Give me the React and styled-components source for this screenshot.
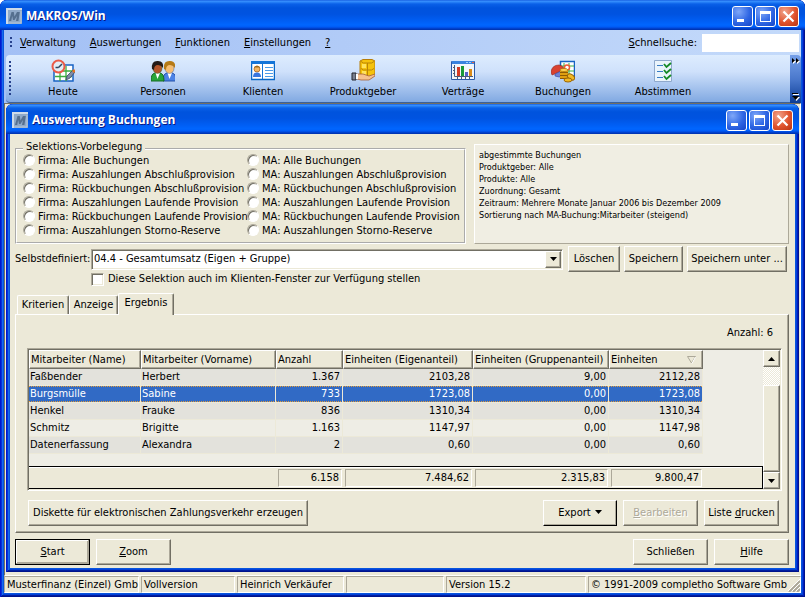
import React, { useState } from "react";
import styled, { createGlobalStyle, css } from "styled-components";

const c = {
  face: "#ece9d8",
  light: "#ffffff",
  shadow: "#aca899",
  dark: "#716f64",
  select: "#316ac5",
};

const uiFont = '"DejaVu Sans Condensed", "DejaVu Sans", sans-serif';

const GlobalStyle = createGlobalStyle`
  *, *::before, *::after { box-sizing: border-box; }
  body { margin: 0; background: #fff; }
  body, button, input, select, table { font-family: ${uiFont}; font-size: 11px; line-height: 14px; color: #000; }
  button, input, select { margin: 0; }
`;

const raised = css`
  border: 1px solid;
  border-color: ${c.light} ${c.dark} ${c.dark} ${c.light};
  box-shadow: inset -1px -1px 0 ${c.shadow};
`;
const sunken = css`
  border: 1px solid;
  border-color: ${c.shadow} ${c.light} ${c.light} ${c.shadow};
`;
const deepSunken = css`
  ${sunken}
  box-shadow: inset 1px 1px 0 ${c.dark}, inset -1px -1px 0 ${c.face};
`;

/* ---------- window frame ---------- */

const Frame = styled.div`
  display: flex;
  flex-direction: column;
  padding: 0 4px 4px;
  border-radius: 7px 7px 0 0;
  background: #0855dd;
  box-shadow: inset 1px 0 #0019cf, inset -1px 0 #00138c, inset 0 -1px #00138c,
    inset 2px 0 #0831d9, inset -2px 0 #001dc0, inset 0 -2px #001ea0,
    inset 3px 0 #166aee, inset -3px -3px 0 #0441d8;
`;
const MainFrame = styled(Frame)`
  min-height: 100vh;
`;
const ChildFrame = styled(Frame)`
  flex: 1;
`;

const TitleBar = styled.header`
  display: flex;
  align-items: center;
  gap: 2px;
  height: 30px;
  margin: 0 -4px;
  padding: 2px 6px 0;
  border-radius: 7px 7px 0 0;
  background: linear-gradient(#0a4fd8 0, #3c93ff 1px, #2a84f8 2px, #0a60e8 4px, #0053dd 8px, #0053e0 14px, #005ef4 21px, #0066ff 25px, #005bf5 27px, #0046d8 28px, #002fa8 30px);
`;
const Title = styled.h1`
  flex: 1;
  margin: 0 0 0 2px;
  font: bold 12px/18px "Open Sans", "Noto Sans", sans-serif;
  color: #fff;
  text-shadow: 1px 1px #0a1883;
`;
const CaptionButton = styled.button`
  display: grid;
  place-items: center;
  width: 21px;
  height: 21px;
  padding: 0;
  border: 1px solid #fff;
  border-radius: 3px;
  background: ${(p) =>
    p.$close
      ? "radial-gradient(circle at 30% 25%, #f0a48c, #e0532d 55%, #b83412)"
      : "radial-gradient(circle at 30% 25%, #7fa7f8, #2f66e4 55%, #1444c8)"};
`;

const AppMark = () => (
  <svg width="16" height="16" viewBox="0 0 16 16" aria-hidden="true">
    <rect width="16" height="16" fill="#8fa9c8" />
    <path d="M0 0H16V2H2V16H0Z" fill="#cfdbe8" />
    <path d="M3 13L5.5 4H7.8L8.500 8.500L11 4H13.8L12.400 13H10L11 8L8.500 12H7L6.200 8L5.200 13Z" fill="#56708f" />
    <path d="M2 15H15V3" stroke="#b5c6da" fill="none" />
  </svg>
);

const Captions = () => (
  <>
    <CaptionButton aria-label="Minimieren">
      <svg width="19" height="19"><path d="M4 12H11V15H4Z" fill="#fff" /></svg>
    </CaptionButton>
    <CaptionButton aria-label="Maximieren">
      <svg width="19" height="19"><path d="M4 4H15V15H4Z M5 7V14H14V7Z" fill="#fff" fillRule="evenodd" /></svg>
    </CaptionButton>
    <CaptionButton $close aria-label="Fenster schließen">
      <svg width="19" height="19"><path d="M4.500 4.500L14.500 14.500M14.500 4.500L4.500 14.500" stroke="#fff" strokeWidth="2.2" /></svg>
    </CaptionButton>
  </>
);

/* ---------- menu and toolbar ---------- */

const Grip = styled.span`
  flex: none;
  width: 2px;
  height: ${(p) => (p.$tall ? 35 : 12)}px;
  background: repeating-linear-gradient(#27418c 0 2px, transparent 2px 4px);
`;
const MenuBar = styled.nav`
  display: flex;
  align-items: center;
  gap: 14px;
  height: 25px;
  padding: 0 2px 0 6px;
  background: linear-gradient(90deg, #a3c0f5, #c4dafa);
`;
const MenuItem = styled.button`
  margin-left: ${(p) => (p.$first ? -6 : 0)}px;
  padding: 0;
  border: 0;
  background: none;
  white-space: nowrap;
`;
const SearchBox = styled.div`
  display: flex;
  align-items: center;
  gap: 5px;
  margin-left: auto;
`;
const SearchInput = styled.input`
  width: 97px;
  height: 18px;
  padding: 0 3px;
  border: 0;
  background: #fff;
`;
const ToolArea = styled.div`
  display: flex;
  height: 48px;
  padding-left: 2px;
  background: linear-gradient(90deg, #a3c0f5, #c4dafa);
`;
const ToolStrip = styled.div`
  display: flex;
  align-items: center;
  flex: 1;
  padding-left: 3px;
  border-radius: 4px 0 0 4px;
  border-bottom: 1px solid #3b619c;
  background: linear-gradient(#ddecfe, #cfe1fb 35%, #81a9e2);
`;
const ToolButton = styled.button`
  display: flex;
  flex-direction: column;
  align-items: center;
  gap: 2px;
  width: 100px;
  padding: 0;
  border: 0;
  background: none;
`;
const Tools = styled.div`
  display: flex;
  margin-left: 2px;
`;
const Overflow = styled.button`
  display: flex;
  flex-direction: column;
  justify-content: space-between;
  align-items: center;
  width: 11px;
  padding: 3px 0 2px;
  border: 0;
  border-radius: 0 4px 0 0;
  background: linear-gradient(#76a0e8, #4a78cc 50%, #0c3c96);
`;

const Person = ({ x, hair, skin, suit, dark }) => (
  <g transform={`translate(${x} 0)`}>
    <path d="M0 22Q0 14.5 4 14H9Q13 14.500 13 22Z" fill={suit} stroke={dark} />
    <path d="M4.500 14L6.500 20L9 14Z" fill="#fff" />
    <ellipse cx="6.500" cy="9.500" rx="4.500" ry="5" fill={skin} stroke={dark} strokeWidth=".4" />
    <path d="M1 10Q0 1.500 7 2Q13 2 12 9Q10 6 7 6Q3 6 3 11Z" fill={hair} />
  </g>
);

const icons = {
  today: (
    <>
      <path d="M3 6H22V22H3Z" fill="#fff" stroke="#1763c4" strokeWidth="1.500" />
      <path d="M9 7V22M15 7V22M4 12H21M4 17.500H21" stroke="#3aae3e" strokeWidth="1.300" />
      <circle cx="7.500" cy="7.500" r="6" fill="#e2edf7" stroke="#ea5a48" strokeWidth="2" />
      <path d="M7.500 8.500L11 5M7.500 8.500H4.500" stroke="#30445e" strokeWidth="1.500" />
      <path d="M15 21L16 17L22 11L24 13L19 19Z" fill="#7f8ca6" stroke="#3a4868" strokeWidth=".8" />
      <path d="M21 12L23 10L24.500 12L23 14Z" fill="#e8731c" />
    </>
  ),
  people: (
    <>
      <Person x={12} hair="#b57a16" skin="#f6bd72" suit="#4b82e6" dark="#2450a8" />
      <Person x={0} hair="#241b18" skin="#b4552a" suit="#28a53a" dark="#146a20" />
    </>
  ),
  clients: (
    <>
      <path d="M0.500 3.500H23.500V20.500H.5Z" fill="#fff" stroke="#0868c8" strokeWidth="1.500" />
      <path d="M0 2H24V5H0Z" fill="#1374d8" />
      <path d="M11.500 5V20" stroke="#1374d8" />
      <path d="M14 8.500H22M14 11.500H22M14 14.500H22M14 17.500H22" stroke="#4b9be8" />
      <circle cx="6" cy="10" r="3" fill="#f3b663" stroke="#a8621c" strokeWidth=".8" />
      <path d="M3 8.500Q6 5 9 8.500Z" fill="#9c6a20" />
      <path d="M2 18Q2 13.500 6 13.500Q10 13.500 10 18Z" fill="#3976de" />
    </>
  ),
  product: (
    <>
      <path d="M9 2L12 .5H21L24 2V16L21 18H12L9 16Z" fill="#f5c20c" stroke="#b77c08" />
      <path d="M10 2.500L12.500 4H20.500L23 2.500M10 9.500L12.500 11H20.500L23 9.500M16.500 4V17" stroke="#b98506" fill="none" />
      <path d="M11 5H15V9H11ZM11 12H15V16H11Z" fill="#ffe35b" />
      <path d="M6 15H12L18 17L24 15V17L18 21H10L6 20Z" fill="#f6c18e" stroke="#a55f36" strokeWidth=".8" />
      <path d="M1 14H5V21H1Z" fill="#7a8090" stroke="#22252c" />
      <path d="M5 15H7V20H5Z" fill="#fff" />
    </>
  ),
  contracts: (
    <>
      <path d="M.5 2.500H23.500V20.500H.5Z" fill="#f2f6fb" stroke="#2c5aa8" />
      <path d="M1 2H23V5H1Z" fill="#3a83df" />
      <path d="M15 3H17V4H15ZM18 3H20V4H18Z" fill="#9fd0ff" />
      <path d="M21 3H23V4H21Z" fill="#ee6242" />
      <path d="M3.500 6V17.500H22M2 8.500H3M2 11.500H3M2 14.500H3M6.500 18V20M10.500 18V20M14.500 18V20M18.500 18V20" stroke="#4a5a78" fill="none" />
      <path d="M6 8H9V17H6Z" fill="#d63a24" />
      <path d="M10 7H13V17H10Z" fill="#189838" />
      <path d="M14 13H17V17H14Z" fill="#5560c8" />
      <path d="M18 10H21V17H18Z" fill="#d98a18" />
    </>
  ),
  bookings: (
    <>
      <path d="M9.500 2.500H23.500V17.500H9.500Z" fill="#fff" stroke="#1763c4" strokeWidth="1.500" />
      <path d="M13 4V17M18 4V17M10 7H23M10 12H23" stroke="#3aae3e" />
      <path d="M0 13Q1 6 8 6Q13 7 13 11L6 14L1 16Z" fill="#d94230" stroke="#942014" strokeWidth=".6" />
      <path d="M4 15L12 11V17Q8 19 4 17Z" fill="#6d83d6" stroke="#3548a0" strokeWidth=".6" />
      <circle cx="16" cy="8.500" r="2.500" fill="#fff" stroke="#ee5a36" strokeWidth="1.500" />
      <path d="M9 11H17V20H9Z" fill="#e0a010" />
      <path d="M9 13.500H17M9 16.500H17M9 19.500H17" stroke="#8e5b04" />
      <ellipse cx="13" cy="11" rx="4" ry="1.500" fill="#ffd755" stroke="#a87008" strokeWidth=".7" />
      <ellipse cx="20" cy="18" rx="4" ry="2.500" transform="rotate(35 20 18)" fill="#f2b924" stroke="#9a6505" />
      <ellipse cx="17" cy="21" rx="4" ry="2" fill="#f2b924" stroke="#9a6505" />
    </>
  ),
  reconcile: (
    <>
      <path d="M3.500 1.500H20.500V22.500H3.500Z" fill="#eaf4fc" stroke="#8fa9cc" />
      <path d="M6 6.500H12M6 12.500H12M6 18.500H12" stroke="#377cc4" />
      <path d="M13 5L15.500 8L20 4M13 11L15.500 14L20 10M13 17L15.500 20L20 16" stroke="#158a26" strokeWidth="1.800" fill="none" />
    </>
  ),
};

const tools = [
  ["Heute", "today"],
  ["Personen", "people"],
  ["Klienten", "clients"],
  ["Produktgeber", "product"],
  ["Verträge", "contracts"],
  ["Buchungen", "bookings"],
  ["Abstimmen", "reconcile"],
];

/* ---------- client area ---------- */

const Workspace = styled.main`
  display: flex;
  flex: 1;
  padding: 0 1px 3px 1px;
  border: 1px solid;
  border-color: ${c.dark} #fff #fff ${c.dark};
  background: ${c.face};
  & > * { min-width: 0; }
`;
const Form = styled.form`
  display: flex;
  flex-direction: column;
  flex: 1;
  padding: 10px 6px 3px 5px;
  background: ${c.face};
`;
const TopRow = styled.div`
  display: flex;
  gap: 8px;
  height: 100px;
`;
const Group = styled.fieldset`
  display: grid;
  grid-template-columns: 224px 1fr;
  grid-auto-flow: column;
  grid-template-rows: repeat(6, 14px);
  width: 451px;
  min-width: 0;
  margin: 0;
  padding: 0 6px;
  border: 2px groove #fff;
`;
const Legend = styled.legend`
  height: 10px;
  margin: 0;
  padding: 0 3px;
  line-height: 6px;
`;
const RadioLabel = styled.label`
  display: flex;
  align-items: center;
  gap: 3px;
  white-space: nowrap;
`;
const Radio = styled.input`
  appearance: none;
  flex: none;
  width: 12px;
  height: 12px;
  margin: 0 0 2px;
  border: 1px solid;
  border-color: ${c.shadow} ${c.light} ${c.light} ${c.shadow};
  border-radius: 50%;
  background: #fff;
  box-shadow: inset 1px 1px 0 ${c.dark};
  &:checked { background: radial-gradient(#000 2px, #fff 3px); }
`;
const Summary = styled.div`
  flex: 1;
  padding: 4px;
  ${sunken}
  border-color: ${c.light} ${c.shadow} ${c.shadow} ${c.light};
  background: #f0eee3;
  font-size: 9px;
  line-height: 12px;
`;
const FilterGrid = styled.div`
  display: grid;
  grid-template-columns: 76px 1fr auto;
  align-items: center;
  margin-top: 2px;
  padding-right: 2px;
`;
const Actions = styled.div`
  display: flex;
  gap: 4px;
  margin-left: 5px;
`;
const PushButton = styled.button`
  width: ${(p) => p.$w}px;
  height: 26px;
  padding: 0;
  ${raised}
  background: ${c.face};
  white-space: nowrap;
  & svg { margin-left: 1px; vertical-align: 2px; }
  &:disabled { color: ${c.shadow}; text-shadow: 1px 1px #fff; }
  ${(p) =>
    p.$strong &&
    css`
      border-color: ${p.$strong === "full" ? "#000" : "#fff #000 #000 #fff"};
      box-shadow: inset -1px -1px 0 ${c.shadow}${p.$strong === "full" ? `, inset 1px 1px 0 #fff, inset -2px -2px 0 ${c.shadow}` : ""};
    `}
`;
const SelectWrap = styled.div`
  position: relative;
  height: 21px;
  ${deepSunken}
  background: #fff;
`;
const Select = styled.select`
  appearance: none;
  width: 100%;
  height: 19px;
  padding: 0 20px 0 2px;
  border: 0;
  background: transparent;
`;
const SelectArrow = styled.span`
  position: absolute;
  top: 1px;
  right: 1px;
  display: grid;
  place-items: center;
  width: 16px;
  height: 17px;
  ${raised}
  background: ${c.face};
  pointer-events: none;
`;
const CheckLabel = styled.label`
  display: flex;
  align-items: center;
  gap: 4px;
  grid-column: 2;
`;
const Check = styled.input`
  appearance: none;
  width: 13px;
  height: 13px;
  margin: 0;
  ${deepSunken}
  background: #fff;
  &:checked { background: radial-gradient(#000 3px, #fff 4px); }
`;

const Tabs = styled.div`
  display: flex;
  align-items: flex-end;
  margin: 7px 0 -1px 2px;
  z-index: 1;
`;
const Tab = styled.button`
  width: ${(p) => p.$w}px;
  height: ${(p) => (p.$active ? 22 : 19)}px;
  margin-bottom: ${(p) => (p.$active ? 0 : 1)}px;
  padding: 0 0 ${(p) => (p.$active ? 3 : 0)}px;
  border: 1px solid;
  border-color: ${c.light} ${c.dark} transparent ${c.light};
  border-bottom: 0;
  border-radius: 2px 2px 0 0;
  box-shadow: inset -1px 0 ${c.shadow};
  background: ${c.face};
`;
const Panel = styled.section`
  display: flex;
  flex-direction: column;
  flex: 1;
  padding: 11px 6px 6px 11px;
  ${raised}
`;
const Count = styled.div`
  padding: 0 9px 0 0;
  text-align: right;
`;
const GridBox = styled.div`
  display: flex;
  flex: 1;
  min-height: 140px;
  margin-top: 8px;
  padding: 1px;
  ${deepSunken}
  background: #eeede5;
`;
const Table = styled.table`
  flex: 1;
  min-width: 0;
  table-layout: fixed;
  border-spacing: 0;
`;
const Col = styled.col`
  width: ${(p) => p.$w}px;
`;
const Th = styled.th`
  height: 19px;
  padding: 0 1px;
  ${raised}
  background: ${c.face};
  font-weight: normal;
  text-align: left;
  white-space: nowrap;
  & svg { float: right; margin: 3px 5px 0 0; }
`;
const Row = styled.tr`
  background: ${(p) => (p.$selected ? c.select : p.$odd ? "#e3e2dc" : "#eeede5")};
`;
const Td = styled.td`
  height: 17px;
  padding: 0 2px 0 1px;
  border-right: 1px solid ${c.face};
  border-bottom: 1px solid ${c.face};
  line-height: 16px;
  color: ${(p) => (p.$selected ? "#fff" : "#000")};
  text-align: ${(p) => (p.$num ? "right" : "left")};
  ${(p) =>
    p.$selected &&
    css`
      background: linear-gradient(90deg, #e09a3c 50%, transparent 50%) 0 0 / 2px 1px repeat-x padding-box,
        linear-gradient(90deg, #e09a3c 50%, transparent 50%) 0 100% / 2px 1px repeat-x padding-box;
    `}
`;
const Blank = styled.td`
  padding: 0;
  background: #eeede5;
`;
const FootTd = styled.td`
  height: 23px;
  padding: 2px 1px 1px 2px;
  border-top: 1px solid #000;
  border-bottom: 1px solid #000;
  border-right: ${(p) => (p.$last ? "1px solid #000" : "0")};
  background: ${c.face};
  box-shadow: inset 0 1px #fff;
`;
const Sum = styled.output`
  display: block;
  height: 18px;
  padding: 0 2px;
  ${sunken}
  line-height: 16px;
  text-align: right;
`;
const ScrollBar = styled.div`
  display: flex;
  flex-direction: column;
  width: 17px;
  background: repeating-conic-gradient(#fff 0 25%, ${c.face} 0 50%) 0 0 / 2px 2px;
`;
const ScrollButton = styled.button`
  display: grid;
  place-items: center;
  height: 17px;
  padding: 0;
  ${raised}
  background: ${c.face};
`;
const Thumb = styled.div`
  flex: 1;
  margin-top: 18px;
  ${raised}
  background: ${c.face};
`;
const ButtonRow = styled.div`
  display: flex;
  gap: 6px;
  margin: ${(p) => p.$m};
`;
const Spacer = styled.span`
  flex: 1;
`;

const StatusBar = styled.footer`
  display: flex;
  gap: 2px;
  height: 17px;
  background: ${c.face};
`;
const StatusCell = styled.div`
  flex: ${(p) => (p.$w ? `0 0 ${p.$w}px` : "1")};
  display: flex;
  justify-content: space-between;
  align-items: center;
  min-width: 0;
  padding-left: 2px;
  ${sunken}
  white-space: nowrap;
`;

const Down = () => (
  <svg width="7" height="4" aria-hidden="true"><path d="M0 0H7L3.500 4Z" /></svg>
);
const Up = () => (
  <svg width="7" height="4" aria-hidden="true"><path d="M0 4H7L3.500 0Z" /></svg>
);

/* ---------- data ---------- */

const kinds = [
  "Alle Buchungen",
  "Auszahlungen Abschlußprovision",
  "Rückbuchungen Abschlußprovision",
  "Auszahlungen Laufende Provision",
  "Rückbuchungen Laufende Provision",
  "Auszahlungen Storno-Reserve",
];
const summary = [
  "abgestimmte Buchungen",
  "Produktgeber: Alle",
  "Produkte: Alle",
  "Zuordnung: Gesamt",
  "Zeitraum: Mehrere Monate Januar 2006 bis Dezember 2009",
  "Sortierung nach MA-Buchung:Mitarbeiter (steigend)",
];
const columns = [
  ["Mitarbeiter (Name)", 112],
  ["Mitarbeiter (Vorname)", 135],
  ["Anzahl", 67],
  ["Einheiten (Eigenanteil)", 130],
  ["Einheiten (Gruppenanteil)", 136],
  ["Einheiten", 94],
];
const rows = [
  ["Faßbender", "Herbert", "1.367", "2103,28", "9,00", "2112,28"],
  ["Burgsmülle", "Sabine", "733", "1723,08", "0,00", "1723,08"],
  ["Henkel", "Frauke", "836", "1310,34", "0,00", "1310,34"],
  ["Schmitz", "Brigitte", "1.163", "1147,97", "0,00", "1147,98"],
  ["Datenerfassung", "Alexandra", "2", "0,60", "0,00", "0,60"],
];
const sums = ["6.158", "7.484,62", "2.315,83", "9.800,47"];
const tabs = [["Kriterien", 52], ["Anzeige", 49], ["Ergebnis", 56]];

export default function App() {
  const [tab, setTab] = useState("Ergebnis");
  const [picked, setPicked] = useState(1);

  return (
    <>
      <GlobalStyle />
      <MainFrame>
        <TitleBar>
          <AppMark />
          <Title>MAKROS/Win</Title>
          <Captions />
        </TitleBar>
        <MenuBar>
          <Grip />
          <MenuItem $first><u>V</u>erwaltung</MenuItem>
          <MenuItem><u>A</u>uswertungen</MenuItem>
          <MenuItem><u>F</u>unktionen</MenuItem>
          <MenuItem><u>E</u>instellungen</MenuItem>
          <MenuItem><u>?</u></MenuItem>
          <SearchBox>
            <label htmlFor="search"><u>S</u>chnellsuche:</label>
            <SearchInput id="search" />
          </SearchBox>
        </MenuBar>
        <ToolArea>
          <ToolStrip>
            <Grip $tall />
            <Tools>
              {tools.map(([label, icon]) => (
                <ToolButton key={label}>
                  <svg width="24" height="24" viewBox="0 0 24 24" fill="none" aria-hidden="true">{icons[icon]}</svg>
                  {label}
                </ToolButton>
              ))}
            </Tools>
          </ToolStrip>
          <Overflow aria-label="Weitere Symbole">
            <svg width="8" height="6">
              <path d="M1 1L4 3.500L1 6ZM5 1L8 3.500L5 6Z" fill="#fff" />
              <path d="M0 0L3 2.500L0 5ZM4 0L7 2.500L4 5Z" />
            </svg>
            <svg width="8" height="8">
              <path d="M1 1H7V2H1ZM1 4H8L4.500 8Z" fill="#fff" />
              <path d="M0 0H6V1H0ZM0 3H7L3.500 7Z" />
            </svg>
          </Overflow>
        </ToolArea>

        <Workspace>
          <ChildFrame>
            <TitleBar>
              <AppMark />
              <Title as="h2">Auswertung Buchungen</Title>
              <Captions />
            </TitleBar>
            <Form onSubmit={(e) => e.preventDefault()}>
              <TopRow>
                <Group>
                  <Legend>Selektions-Vorbelegung</Legend>
                  {["Firma", "MA"].map((who) =>
                    kinds.map((kind) => (
                      <RadioLabel key={who + kind}>
                        <Radio type="radio" name="preset" />
                        {who}: {kind}
                      </RadioLabel>
                    ))
                  )}
                </Group>
                <Summary>
                  {summary.map((line) => <div key={line}>{line}</div>)}
                </Summary>
              </TopRow>

              <FilterGrid>
                <label htmlFor="preset">Selbstdefiniert:</label>
                <SelectWrap>
                  <Select id="preset">
                    <option>04.4 - Gesamtumsatz (Eigen + Gruppe)</option>
                  </Select>
                  <SelectArrow><Down /></SelectArrow>
                </SelectWrap>
                <Actions>
                  <PushButton type="button" $w={52}>Löschen</PushButton>
                  <PushButton type="button" $w={59}>Speichern</PushButton>
                  <PushButton type="button" $w={100}>Speichern unter ...</PushButton>
                </Actions>
                <CheckLabel>
                  <Check type="checkbox" />
                  Diese Selektion auch im Klienten-Fenster zur Verfügung stellen
                </CheckLabel>
              </FilterGrid>

              <Tabs role="tablist">
                {tabs.map(([name, w]) => (
                  <Tab key={name} type="button" role="tab" aria-selected={tab === name} $w={w} $active={tab === name} onClick={() => setTab(name)}>
                    {name}
                  </Tab>
                ))}
              </Tabs>
              <Panel>
                <Count>Anzahl: 6</Count>
                <GridBox>
                  <Table>
                    <colgroup>
                      {columns.map(([name, w]) => <Col key={name} $w={w} />)}
                      <col />
                    </colgroup>
                    <thead>
                      <tr>
                        {columns.map(([name], i) => (
                          <Th key={name}>
                            {i === 5 && (
                              <svg width="9" height="8" aria-hidden="true">
                                <path d="M.5 .5H8.500L4.500 7Z" fill="none" stroke="#aca899" />
                                <path d="M8.500 1L5 7.500" stroke="#fff" />
                              </svg>
                            )}
                            {name}
                          </Th>
                        ))}
                        <Blank />
                      </tr>
                    </thead>
                    <tbody>
                      {rows.map((row, r) => (
                        <Row key={row[0]} $odd={r % 2 === 0} $selected={r === picked} onClick={() => setPicked(r)}>
                          {row.map((cell, i) => (
                            <Td key={i} $num={i > 1} $selected={r === picked}>{cell}</Td>
                          ))}
                          <Blank />
                        </Row>
                      ))}
                      <tr><Blank colSpan={7} /></tr>
                    </tbody>
                    <tfoot>
                      <tr>
                        <FootTd colSpan={2} />
                        {sums.map((s) => <FootTd key={s}><Sum>{s}</Sum></FootTd>)}
                        <FootTd $last />
                      </tr>
                    </tfoot>
                  </Table>
                  <ScrollBar>
                    <ScrollButton type="button" aria-label="Nach oben"><Up /></ScrollButton>
                    <Thumb />
                    <ScrollButton type="button" aria-label="Nach unten"><Down /></ScrollButton>
                  </ScrollBar>
                </GridBox>
                <ButtonRow $m="9px 3px 0 1px">
                  <PushButton type="button" $w={280}>Diskette für elektronischen Zahlungsverkehr erzeugen</PushButton>
                  <Spacer />
                  <PushButton type="button" $w={74} $strong="edge">Export <Down /></PushButton>
                  <PushButton type="button" $w={75} disabled><u>B</u>earbeiten</PushButton>
                  <PushButton type="button" $w={75}>Liste <u>d</u>rucken</PushButton>
                </ButtonRow>
              </Panel>
              <ButtonRow $m="6px 0 0">
                <PushButton $w={75} $strong="full"><u>S</u>tart</PushButton>
                <PushButton type="button" $w={75}><u>Z</u>oom</PushButton>
                <Spacer />
                <PushButton type="button" $w={75}>Schließen</PushButton>
                <PushButton type="button" $w={75}><u>H</u>ilfe</PushButton>
              </ButtonRow>
            </Form>
          </ChildFrame>
        </Workspace>

        <StatusBar>
          <StatusCell $w={135}>Musterfinanz (Einzel) Gmb</StatusCell>
          <StatusCell $w={94}>Vollversion</StatusCell>
          <StatusCell $w={107}>Heinrich Verkäufer</StatusCell>
          <StatusCell $w={98} />
          <StatusCell $w={140}>Version 15.2</StatusCell>
          <StatusCell>
            © 1991-2009 completho Software Gmb
            <svg width="12" height="14" aria-hidden="true">
              <path d="M1 14L12 3M5 14L12 7M9 14L12 11" stroke="#aca899" strokeWidth="2" />
              <path d="M0 13L12 1M4 13L12 5M8 13L12 9" stroke="#fff" />
            </svg>
          </StatusCell>
        </StatusBar>
      </MainFrame>
    </>
  );
}
